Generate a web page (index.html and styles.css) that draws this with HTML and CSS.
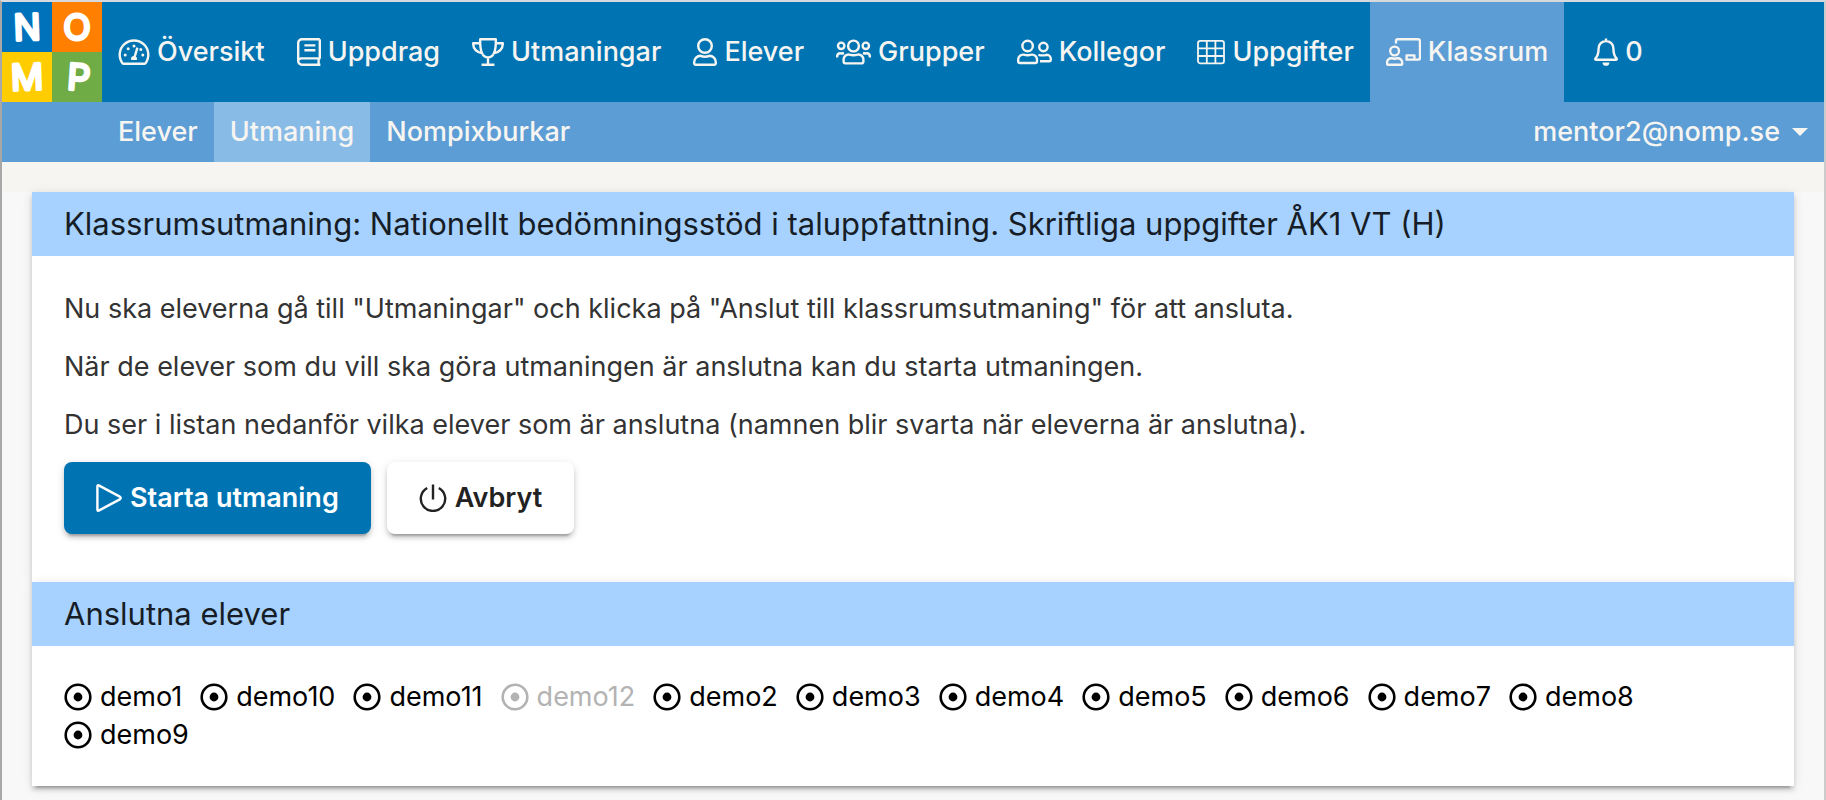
FILE: index.html
```html
<!DOCTYPE html>
<html lang="sv">
<head>
    <meta charset="UTF-8">
    <meta name="viewport" content="width=device-width, initial-scale=1.0">
    <title>Nomp - Klassrumsutmaning</title>
    <link rel="stylesheet" href="styles.css">
</head>
<body>
    <!-- Shared icons -->
    <svg class="icon-defs" aria-hidden="true">
        <symbol id="icon-target" viewBox="0 0 28 28">
            <circle cx="14" cy="14" r="12.3" fill="none" stroke="currentColor" stroke-width="2.6"/>
            <circle cx="14" cy="14" r="4.4" fill="currentColor"/>
        </symbol>
    </svg>

    <header>
        <nav class="navbar">
            <a class="logo" href="#" aria-label="Nomp">
                <svg width="100" height="100" viewBox="0 0 100 100">
                    <rect width="50" height="50" fill="#0072bc"/>
                    <rect x="50" width="50" height="50" fill="#ff8000"/>
                    <rect y="50" width="50" height="50" fill="#ffcc00"/>
                    <rect x="50" y="50" width="50" height="50" fill="#6fac46"/>
                    <text x="25" y="38" transform="rotate(-2 25 25)">N</text>
                    <text x="75" y="38">O</text>
                    <text x="25" y="88" transform="rotate(-2 25 75)">M</text>
                    <text x="77" y="88" transform="rotate(4 77 75)">P</text>
                </svg>
            </a>
            <a class="nav-link" href="#">
                <svg class="icon" width="32" height="28" viewBox="0 0 32 28">
                    <path d="M4.6 25.4A14.3 14.3 0 1 1 27.4 25.4Q27.1 25.8 26.5 25.8H5.5Q4.9 25.8 4.6 25.4Z"/>
                    <path d="M19.4 9.6L16.6 19"/>
                    <path class="fill" d="M13.2 22a3 3 0 1 1 5.6 0z"/>
                    <g class="fill"><circle cx="16" cy="8" r="1.5"/><circle cx="10.2" cy="10.8" r="1.5"/><circle cx="7.2" cy="17" r="1.5"/><circle cx="22.8" cy="11.4" r="1.5"/><circle cx="24.8" cy="17" r="1.5"/></g>
                </svg>
                Översikt
            </a>
            <a class="nav-link" href="#">
                <svg class="icon" width="24" height="28" viewBox="0 0 24 28">
                    <path d="M22.8 1.2H5A3.8 3.8 0 0 0 1.2 5V23A3.8 3.8 0 0 0 5 26.8H23.4M22.8 1.2V20.4M23.4 20.4H5A3.2 3.2 0 0 0 1.2 23.6M21.6 20.4V26.8M7.4 7.4H18.4M7.4 12.2H18.4"/>
                </svg>
                Uppdrag
            </a>
            <a class="nav-link" href="#">
                <svg class="icon" width="32" height="28" viewBox="0 0 32 28">
                    <path d="M8.2 1.2H23.8Q24.4 19.4 16 19.4T8.2 1.2ZM8 5.2H1.2Q1 13.6 11 15.6M24 5.2H30.8Q31 13.6 21 15.6M16 19.4V26.6M9.6 26.8H22.4"/>
                </svg>
                Utmaningar
            </a>
            <a class="nav-link" href="#">
                <svg class="icon" width="24" height="28" viewBox="0 0 24 28">
                    <circle cx="12" cy="8" r="6.8"/>
                    <path d="M7.6 17.8Q12 19.6 16.4 17.8A6.4 6.4 0 0 1 22.8 24.2V25.2A1.6 1.6 0 0 1 21.2 26.8H2.8A1.6 1.6 0 0 1 1.2 25.2V24.2A6.4 6.4 0 0 1 7.6 17.8Z"/>
                </svg>
                Elever
            </a>
            <a class="nav-link" href="#">
                <svg class="icon" width="35" height="28" viewBox="0 0 35 28">
                    <circle cx="17.5" cy="8" r="5.4"/>
                    <circle cx="5.2" cy="7.8" r="3.2"/>
                    <circle cx="29.8" cy="7.8" r="3.2"/>
                    <path d="M13.4 16.6Q17.5 18 21.6 16.6A5 5 0 0 1 27.4 21.6V23.6A1.8 1.8 0 0 1 25.6 25.4H9.4A1.8 1.8 0 0 1 7.6 23.6V21.6A5 5 0 0 1 13.4 16.6ZM1 19.4Q1 15.4 4 15.2Q5.4 15.8 8 15M34 19.4Q34 15.4 31 15.2Q29.6 15.8 27 15"/>
                </svg>
                Grupper
            </a>
            <a class="nav-link" href="#">
                <svg class="icon" width="35" height="28" viewBox="0 0 35 28">
                    <circle cx="10.6" cy="8" r="5.2"/>
                    <circle cx="26.4" cy="9" r="4.2"/>
                    <path d="M6.6 16.6Q10.6 18 14.6 16.6A5 5 0 0 1 20 21.6V23.2A1.8 1.8 0 0 1 18.2 25H3A1.8 1.8 0 0 1 1.2 23.2V21.6A5 5 0 0 1 6.6 16.6ZM21.4 16.8Q26 18 29.6 16.8A4.4 4.4 0 0 1 33.8 21.2V22A1.2 1.2 0 0 1 32.6 23.2H23"/>
                </svg>
                Kollegor
            </a>
            <a class="nav-link" href="#">
                <svg class="icon thin" width="28" height="28" viewBox="0 0 28 28">
                    <rect x="1" y="2.8" width="26" height="22.6" rx="2.4"/>
                    <path d="M1 10.4H27M1 18H27M9.8 2.8V25.4M18.4 2.8V25.4"/>
                </svg>
                Uppgifter
            </a>
            <a class="nav-link active" href="#">
                <svg class="icon" width="35" height="28" viewBox="0 0 35 28">
                    <circle cx="8.6" cy="13" r="4.4"/>
                    <path d="M5.6 20.2Q8.6 21.2 11.6 20.2A4.4 4.4 0 0 1 16.2 24.4V25.4A1.4 1.4 0 0 1 14.8 26.8H2.4A1.4 1.4 0 0 1 1 25.4V24.4A4.4 4.4 0 0 1 5.6 20.2ZM10 5.6V3A1.8 1.8 0 0 1 11.8 1.2H32.2A1.8 1.8 0 0 1 34 3V19.8A1.8 1.8 0 0 1 32.2 21.6H19.4M20.6 21.6V17.4H28.4V21.6"/>
                </svg>
                Klassrum
            </a>
            <a class="nav-link notifications" href="#">
                <svg class="icon" width="24" height="28" viewBox="0 0 24 28">
                    <path d="M12 .4V3M12 3A7.4 7.4 0 0 0 4.6 10.4C4.6 16.6 3.2 18.4 1.6 20.2Q.6 21.8 2.4 21.8H21.6Q23.4 21.8 22.4 20.2C20.8 18.4 19.4 16.6 19.4 10.4A7.4 7.4 0 0 0 12 3Z"/>
                    <path class="fill" d="M8.6 24.4H15.4A3.4 3.4 0 0 1 8.6 24.4Z"/>
                </svg>
                0
            </a>
        </nav>
        <nav class="subnav">
            <a class="subnav-link" href="#">Elever</a>
            <a class="subnav-link active" href="#">Utmaning</a>
            <a class="subnav-link" href="#">Nompixburkar</a>
            <a class="subnav-link user-menu" href="#">mentor2@nomp.se <span class="caret"></span></a>
        </nav>
    </header>

    <main>
        <section class="card">
            <h1 class="card-title">Klassrumsutmaning: Nationellt bedömningsstöd i taluppfattning. Skriftliga uppgifter ÅK1 VT (H)</h1>
            <div class="card-body">
                <p>Nu ska eleverna gå till "Utmaningar" och klicka på "Anslut till klassrumsutmaning" för att ansluta.</p>
                <p>När de elever som du vill ska göra utmaningen är anslutna kan du starta utmaningen.</p>
                <p>Du ser i listan nedanför vilka elever som är anslutna (namnen blir svarta när eleverna är anslutna).</p>
                <div class="buttons">
                    <button type="button" class="btn btn-primary">
                        <svg class="icon" width="26" height="28" viewBox="0 0 26 28">
                            <path d="M1.4 2.6Q1.4 .6 3.2 1.6L23.8 12.6Q25.6 14 23.8 15.4L3.2 26.4Q1.4 27.4 1.4 25.4Z"/>
                        </svg>
                        Starta utmaning
                    </button>
                    <button type="button" class="btn">
                        <svg class="icon" width="28" height="28" viewBox="0 0 28 28">
                            <path d="M14 .4V15.4M8.2 4A12.2 12.2 0 1 0 19.8 4"/>
                        </svg>
                        Avbryt
                    </button>
                </div>
            </div>
        </section>

        <section class="card">
            <h2 class="card-title">Anslutna elever</h2>
            <div class="card-body">
                <ul class="students">
                    <li><svg class="target"><use href="#icon-target"/></svg>demo1</li>
                    <li><svg class="target"><use href="#icon-target"/></svg>demo10</li>
                    <li><svg class="target"><use href="#icon-target"/></svg>demo11</li>
                    <li class="offline"><svg class="target"><use href="#icon-target"/></svg>demo12</li>
                    <li><svg class="target"><use href="#icon-target"/></svg>demo2</li>
                    <li><svg class="target"><use href="#icon-target"/></svg>demo3</li>
                    <li><svg class="target"><use href="#icon-target"/></svg>demo4</li>
                    <li><svg class="target"><use href="#icon-target"/></svg>demo5</li>
                    <li><svg class="target"><use href="#icon-target"/></svg>demo6</li>
                    <li><svg class="target"><use href="#icon-target"/></svg>demo7</li>
                    <li><svg class="target"><use href="#icon-target"/></svg>demo8</li>
                    <li><svg class="target"><use href="#icon-target"/></svg>demo9</li>
                </ul>
            </div>
        </section>
    </main>
</body>
</html>
```
FILE: styles.css
```css
* {
    box-sizing: border-box;
}

body {
    margin: 0;
    min-height: 100vh;
    border: 2px solid #cbcbcb;
    border-top-color: #d6d9de;
    border-left-color: #a8a8a8;
    border-bottom: none;
    background-color: #f8f8f8;
    font-family: Inter, "Liberation Sans", sans-serif;
    font-size: 27px;
    line-height: 42px;
    color: #333;
}

a {
    color: #f7f5f1;
    text-decoration: none;
}

.icon-defs {
    display: none;
}

.icon {
    flex: none;
    fill: none;
    stroke: currentColor;
    stroke-width: 2.4;
    stroke-linejoin: round;
}

.icon.thin {
    stroke-width: 1.8;
}

.icon .fill {
    fill: currentColor;
    stroke: none;
}

/* Navigation */
.navbar {
    display: flex;
    height: 100px;
    background-color: #0074b3;
    font-weight: 500;
}

.logo {
    width: 100px;
    height: 100px;
}

.logo text {
    font-size: 36px;
    font-weight: 400;
    text-anchor: middle;
    fill: #fff;
    stroke: #fff;
    stroke-width: 3;
    stroke-linejoin: round;
}

.nav-link {
    display: flex;
    align-items: center;
    gap: 7px;
    padding: 0 16px;
}

.nav-link.active {
    background-color: #5c9dd5;
}

.notifications {
    margin-left: 14px;
}

.subnav {
    display: flex;
    height: 60px;
    padding-left: 100px;
    background-color: #5c9dd5;
    font-weight: 500;
}

.subnav-link {
    display: flex;
    align-items: center;
    padding: 0 16px;
}

.subnav-link.active {
    background-color: #89bbe7;
}

.user-menu {
    gap: 12px;
    margin-left: auto;
}

.caret {
    border: 8px solid transparent;
    border-top-color: currentColor;
    border-bottom: none;
}

/* Content */
main {
    padding: 0 30px;
    border-top: 30px solid #f7f5f1;
}

.card {
    position: relative;
    background-color: #fff;
    box-shadow: 0 6px 2px -4px rgba(0, 0, 0, 0.2),
                0 4px 4px 0 rgba(0, 0, 0, 0.14),
                0 2px 10px 0 rgba(0, 0, 0, 0.12);
}

.card-title {
    margin: 0;
    padding: 12px 32px;
    background-color: #a7d2ff;
    font-size: 31px;
    font-weight: 400;
    line-height: 40px;
    color: #161d26;
}

.card-body {
    padding: 32px;
}

.card-body p {
    margin: 0 0 16px;
}

.buttons {
    display: flex;
    gap: 16px;
    padding-bottom: 16px;
}

.btn {
    display: flex;
    align-items: center;
    gap: 8px;
    height: 72px;
    padding: 0 32px;
    border: none;
    border-radius: 8px;
    background-color: #fff;
    box-shadow: 0 6px 2px -4px rgba(0, 0, 0, 0.2),
                0 4px 4px 0 rgba(0, 0, 0, 0.14),
                0 2px 10px 0 rgba(0, 0, 0, 0.12);
    font: inherit;
    font-weight: 600;
    color: #222;
    cursor: pointer;
}

.btn-primary {
    background-color: #0074b3;
    color: #fff;
}

.students {
    display: flex;
    flex-wrap: wrap;
    column-gap: 18px;
    margin: 0;
    padding: 0;
    list-style: none;
    line-height: 38px;
    color: #000;
}

.students li {
    display: flex;
    align-items: center;
    gap: 8px;
}

.students .offline {
    color: #b3b3b3;
}

.target {
    width: 28px;
    height: 28px;
}
```
